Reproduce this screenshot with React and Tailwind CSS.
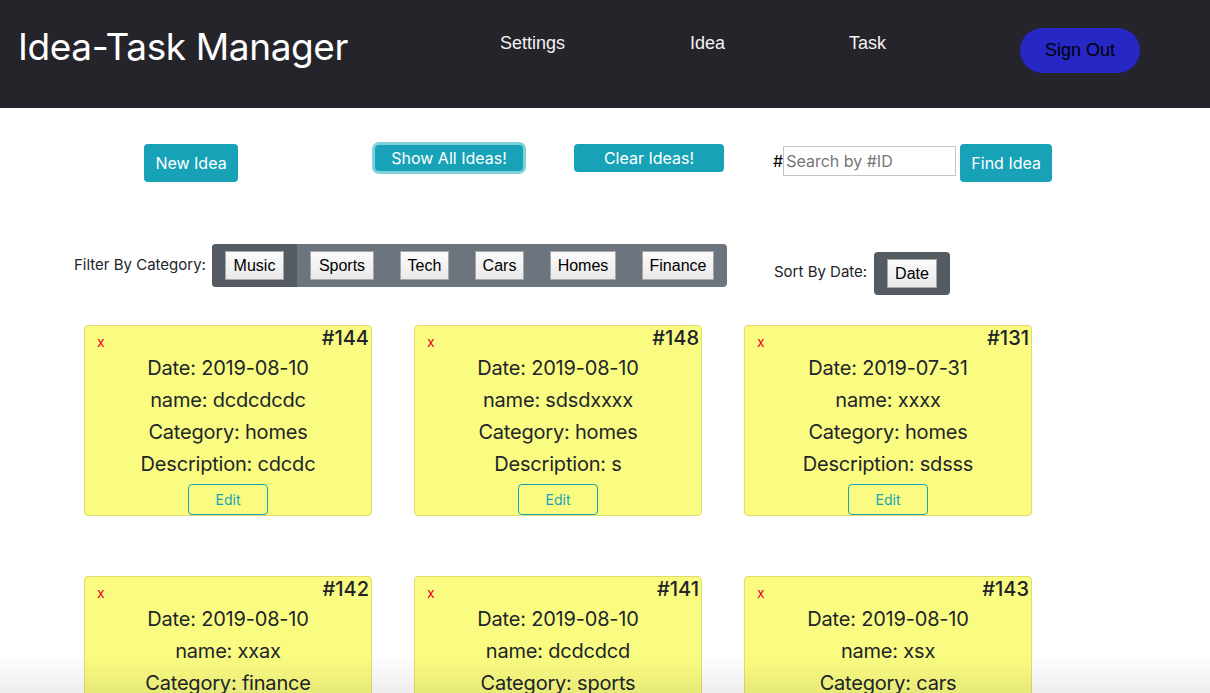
import React from 'react'

const ideas = [
  { id: 144, date: '2019-08-10', name: 'dcdcdcdc', category: 'homes', description: 'cdcdc' },
  { id: 148, date: '2019-08-10', name: 'sdsdxxxx', category: 'homes', description: 's' },
  { id: 131, date: '2019-07-31', name: 'xxxx', category: 'homes', description: 'sdsss' },
  { id: 142, date: '2019-08-10', name: 'xxax', category: 'finance', description: 'xaxa' },
  { id: 141, date: '2019-08-10', name: 'dcdcdcd', category: 'sports', description: 'dcdc' },
  { id: 143, date: '2019-08-10', name: 'xsx', category: 'cars', description: 'sxsx' },
]

const categories = [
  { label: 'Music', w: 'w-[59px]', active: true },
  { label: 'Sports', w: 'w-[64px]' },
  { label: 'Tech', w: 'w-[49px]' },
  { label: 'Cars', w: 'w-[49px]' },
  { label: 'Homes', w: 'w-[66px]' },
  { label: 'Finance', w: 'w-[72px]' },
]

const sans = "font-['Inter','Noto_Sans',sans-serif]"
const helv = "font-['Liberation_Sans','Arial',sans-serif]"

function GreyButton({ label, w }) {
  return (
    <button
      className={`${w} h-[29px] ${helv} text-[16px] text-black border border-[#a6a6a6] bg-gradient-to-b from-[#fbfbfb] to-[#e9e9e9]`}
    >
      {label}
    </button>
  )
}

function InfoButton({ children, className = '' }) {
  return (
    <button
      className={`bg-[#17a2b8] text-white rounded-[4px] ${sans} text-[16px] flex items-center justify-center ${className}`}
    >
      {children}
    </button>
  )
}

/** One sticky-note card for an idea. */
function IdeaCard({ idea }) {
  return (
    <div className="w-[288px] h-[191px] bg-[#fafc82] border border-[#e2dc6a] rounded-[4px] flex flex-col items-center text-[#212529]">
      <div className="w-full h-[26px] flex justify-between items-start pl-[12px] pr-[2px]">
        <span className={`mt-[7px] text-[14px] leading-[18px] text-[#f0002a] ${sans}`}>x</span>
        <span className={`text-[20px] leading-[24px] font-medium ${sans}`}>#{idea.id}</span>
      </div>
      {[
        `Date: ${idea.date}`,
        `name: ${idea.name}`,
        `Category: ${idea.category}`,
        `Description: ${idea.description}`,
      ].map((line) => (
        <div key={line} className={`h-[32px] leading-[32px] text-[20px] tracking-[-0.2px] ${sans}`}>
          {line}
        </div>
      ))}
      <button
        className={`mt-[4px] w-[80px] h-[31px] border border-[#17a2b8] rounded-[4px] text-[#17a2b8] text-[14px] ${sans}`}
      >
        Edit
      </button>
    </div>
  )
}

export default function App() {
  return (
    <div className="min-h-screen bg-white">
      <header className="h-[108px] bg-[#25242b] flex items-start">
        <div className={`w-[500px] pl-[18px] pt-[24px] text-white text-[37px] leading-[46px] tracking-[-0.4px] ${sans}`}>
          Idea-Task Manager
        </div>
        <div className={`w-[190px] pt-[32px] text-[18px] leading-[22px] text-[#f2f2f2] ${helv}`}>Settings</div>
        <div className={`w-[159px] pt-[32px] text-[18px] leading-[22px] text-[#f2f2f2] ${helv}`}>Idea</div>
        <div className={`w-[171px] pt-[32px] text-[18px] leading-[22px] text-[#f2f2f2] ${helv}`}>Task</div>
        <button
          className={`mt-[28px] w-[120px] h-[45px] rounded-full bg-[#2727c6] text-black text-[18px] ${helv}`}
        >
          Sign Out
        </button>
      </header>

      <div className="flex items-start pt-[34px] pl-[144px]">
        <InfoButton className="mt-[2px] w-[94px] h-[38px]">New Idea</InfoButton>
        <InfoButton className="ml-[137px] mt-[3px] w-[148px] h-[26px] ring-[3px] ring-[#80d1dc]">
          Show All Ideas!
        </InfoButton>
        <InfoButton className="ml-[51px] mt-[2px] w-[150px] h-[28px]">Clear Ideas!</InfoButton>
        <span className={`ml-[49px] mt-[9px] text-[16px] leading-[20px] text-black ${sans}`}>#</span>
        <input
          placeholder="Search by #ID"
          className={`mt-[4px] w-[173px] h-[30px] border border-[#c4c4c4] px-[2px] text-[16px] placeholder:text-[#757575] ${sans}`}
        />
        <InfoButton className="ml-[4px] mt-[2px] w-[92px] h-[38px]">Find Idea</InfoButton>
      </div>

      <div className="flex items-start pt-[62px] pl-[74px]">
        <span className={`mt-[11px] w-[138px] text-[15px] leading-[20px] text-[#212529] ${sans}`}>
          Filter By Category:
        </span>
        <div className="flex rounded-[4px] bg-[#6c757d] overflow-hidden">
          {categories.map((c) => (
            <div key={c.label} className={`px-[13px] py-[7px] ${c.active ? 'bg-[#545b62]' : ''}`}>
              <GreyButton label={c.label} w={c.w} />
            </div>
          ))}
        </div>
        <span className={`ml-[47px] mt-[18px] w-[100px] text-[15px] leading-[20px] text-[#212529] ${sans}`}>
          Sort By Date:
        </span>
        <div className="mt-[8px] rounded-[4px] bg-[#545b62] px-[13px] py-[7px]">
          <GreyButton label="Date" w="w-[50px]" />
        </div>
      </div>

      <div className="grid grid-cols-[288px_288px_288px] gap-x-[42px] gap-y-[60px] pt-[30px] pl-[84px] pb-[40px]">
        {ideas.map((idea) => (
          <IdeaCard key={idea.id} idea={idea} />
        ))}
      </div>

      <div className="pointer-events-none fixed inset-x-0 bottom-0 h-[38px] bg-gradient-to-b from-transparent to-black/[0.07]" />
    </div>
  )
}
